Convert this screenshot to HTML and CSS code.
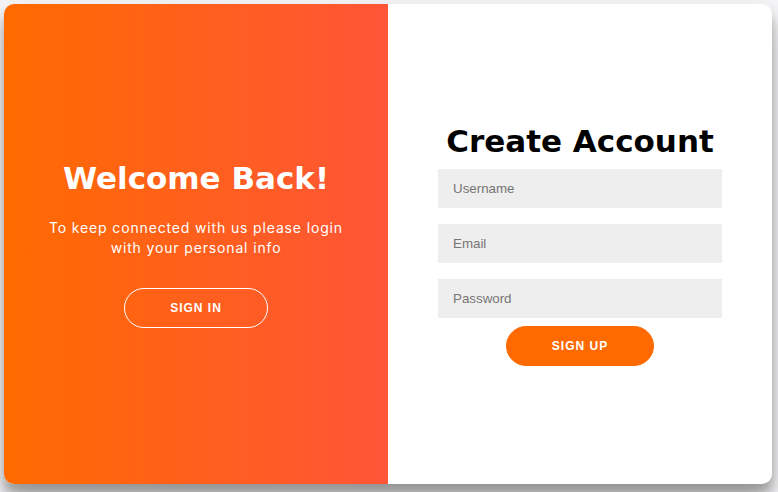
FILE: index.html
```html
<!DOCTYPE html>
<html lang="en">
<head>
<meta charset="utf-8">
<title>Sign up</title>
<link rel="stylesheet" href="styles.css">
</head>
<body>
<div class="container">
  <div class="panel panel-left">
    <h1 class="title title-light">Welcome Back!</h1>
    <p class="lead">To keep connected with us please login with your personal info</p>
    <button class="btn btn-ghost" type="button">Sign In</button>
  </div>
  <div class="panel panel-right">
    <form class="form">
      <h1 class="title">Create Account</h1>
      <input class="field" type="text" placeholder="Username">
      <input class="field" type="email" placeholder="Email">
      <input class="field" type="password" placeholder="Password">
      <button class="btn btn-solid" type="button">Sign Up</button>
    </form>
  </div>
</div>
</body>
</html>
```
FILE: styles.css
```css
* { box-sizing: border-box; }
html, body { height: 100%; }
body {
  margin: 0;
  padding: 4px 0 0 4px;
  background: #f6f5f7;
  font-family: "DejaVu Sans", sans-serif;
}
.container {
  width: 768px;
  height: 480px;
  display: flex;
  background: #fff;
  border-radius: 10px;
  overflow: hidden;
  box-shadow: 0 14px 28px rgba(0,0,0,0.25), 0 10px 10px rgba(0,0,0,0.22);
}
.panel {
  width: 384px;
  display: flex;
  flex-direction: column;
  align-items: center;
  justify-content: center;
  text-align: center;
}
.panel-left {
  background: linear-gradient(to right, #ff6a00, #ff5538);
  color: #fff;
  padding: 0 30px 2px;
}
.panel-right { padding: 0 50px; }
.form {
  width: 100%;
  display: flex;
  flex-direction: column;
  align-items: center;
}
.title {
  margin: 0;
  font-family: "DejaVu Sans", sans-serif;
  font-weight: bold;
  font-size: 31px;
  line-height: 39px;
  color: #000;
}
.title-light { color: #fff; }
.lead {
  margin: 20px 0 30px;
  font-family: Inter, "Open Sans", sans-serif;
  font-size: 14px;
  line-height: 20px;
  letter-spacing: 0.85px;
  font-weight: 400;
}
.field {
  width: 100%;
  margin: 8px 0;
  padding: 12px 15px;
  border: none;
  background: #eee;
  font-family: "Liberation Sans", Arial, sans-serif;
  font-size: 13.333px;
  line-height: 15px;
  height: 39px;
  color: #333;
}
.field::placeholder { color: #757575; }
.btn {
  border-radius: 20px;
  padding: 12px 45px;
  font-family: "Liberation Sans", Arial, sans-serif;
  font-size: 12px;
  line-height: 14px;
  font-weight: bold;
  letter-spacing: 1px;
  text-transform: uppercase;
  color: #fff;
  cursor: pointer;
}
.btn-solid {
  border: 1px solid #ff6a00;
  background: #ff6a00;
}
.btn-ghost {
  border: 1px solid #fff;
  background: transparent;
}
```
